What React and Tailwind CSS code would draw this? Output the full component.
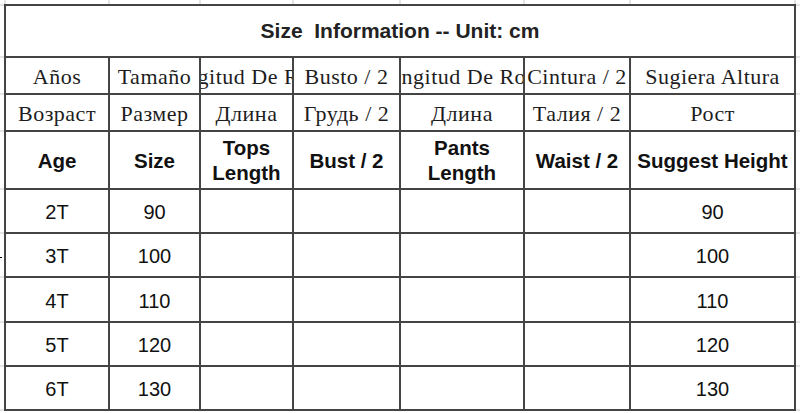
import React from 'react';

const spanish = ['Años', 'Tamaño', 'Longitud De Ropa', 'Busto / 2', 'Longitud De Ropa', 'Cintura / 2', 'Sugiera Altura'];
const russian = ['Возраст', 'Размер', 'Длина', 'Грудь / 2', 'Длина', 'Талия / 2', 'Рост'];
const headers = [['Age'], ['Size'], ['Tops', 'Length'], ['Bust / 2'], ['Pants', 'Length'], ['Waist / 2'], ['Suggest Height']];
const sizes = [
    { age: '2T', size: '90', height: '90' },
    { age: '3T', size: '100', height: '100' },
    { age: '4T', size: '110', height: '110' },
    { age: '5T', size: '120', height: '120' },
    { age: '6T', size: '130', height: '130' },
];

const sans = "font-['Liberation_Sans',Arial,sans-serif]";
const serif = "font-['Liberation_Serif','Times_New_Roman',serif]";

const Cell = ({ children, className = '' }) => (
    <div className={`bg-white flex items-center justify-center overflow-hidden whitespace-nowrap ${className}`}>
        {children}
    </div>
);

const App = () => {
    return (
        <div className="w-[800px] h-[413px] bg-white overflow-hidden">
            {/* faint sheet gridlines above the table */}
            <div className="flex h-[4px]">
                <div className="w-[4px] bg-white" />
                <div className="grid grid-cols-[102px_89px_91px_105px_122px_104px_163px] gap-x-[2px] px-[2px] bg-[#e4e4e4]">
                    {spanish.map((_, i) => (
                        <div key={i} className="bg-white h-[4px]" />
                    ))}
                </div>
            </div>

            <div className="flex">
                {/* left margin ticks */}
                <div className="w-[4px] grid grid-rows-[50px_35px_35px_56px_42px_42px_43px_42px_42px] gap-y-[2px] py-[2px] bg-[#e4e4e4]">
                    {Array.from({ length: 9 }).map((_, i) => (
                        <div key={i} className="bg-white flex items-center">
                            {i === 5 && <div className="w-[2px] h-[1px] bg-black mt-[4px]" />}
                        </div>
                    ))}
                </div>

                {/* the size table */}
                <div className="grid grid-cols-[102px_89px_91px_105px_122px_104px_163px] grid-rows-[50px_35px_35px_56px_42px_42px_43px_42px_42px] gap-[2px] p-[2px] bg-[#444]">
                    <Cell className={`col-span-7 text-[21px] font-bold text-[#222] whitespace-pre ${sans}`}>
                        {'Size  Information -- Unit: cm'}
                    </Cell>

                    {spanish.map((text, i) => (
                        <Cell key={`es-${i}`} className={`text-[22px] tracking-[0.5px] text-[#1d1d1d] pt-[1px] ${serif}`}>
                            {text}
                        </Cell>
                    ))}

                    {russian.map((text, i) => (
                        <Cell key={`ru-${i}`} className={`text-[22px] tracking-[0.5px] text-[#1d1d1d] pt-[1px] ${serif}`}>
                            {text}
                        </Cell>
                    ))}

                    {headers.map((lines, i) => (
                        <Cell key={`h-${i}`} className={`flex-col text-[20.5px] leading-[25px] font-bold text-[#111] ${sans}`}>
                            {lines.map((line) => (
                                <span key={line}>{line}</span>
                            ))}
                        </Cell>
                    ))}

                    {sizes.map((row) => (
                        <React.Fragment key={row.age}>
                            <Cell className={`text-[20px] text-[#111] pt-[2px] ${sans}`}>{row.age}</Cell>
                            <Cell className={`text-[20px] text-[#111] pt-[2px] ${sans}`}>{row.size}</Cell>
                            <Cell />
                            <Cell />
                            <Cell />
                            <Cell />
                            <Cell className={`text-[20px] text-[#111] pt-[2px] ${sans}`}>{row.height}</Cell>
                        </React.Fragment>
                    ))}
                </div>

                {/* right margin ticks */}
                <div className="flex-1 grid grid-rows-[50px_35px_35px_56px_42px_42px_43px_42px_42px] gap-y-[2px] py-[2px] bg-[#e4e4e4]">
                    {Array.from({ length: 9 }).map((_, i) => (
                        <div key={i} className="bg-white" />
                    ))}
                </div>
            </div>
        </div>
    );
};

export default App;
